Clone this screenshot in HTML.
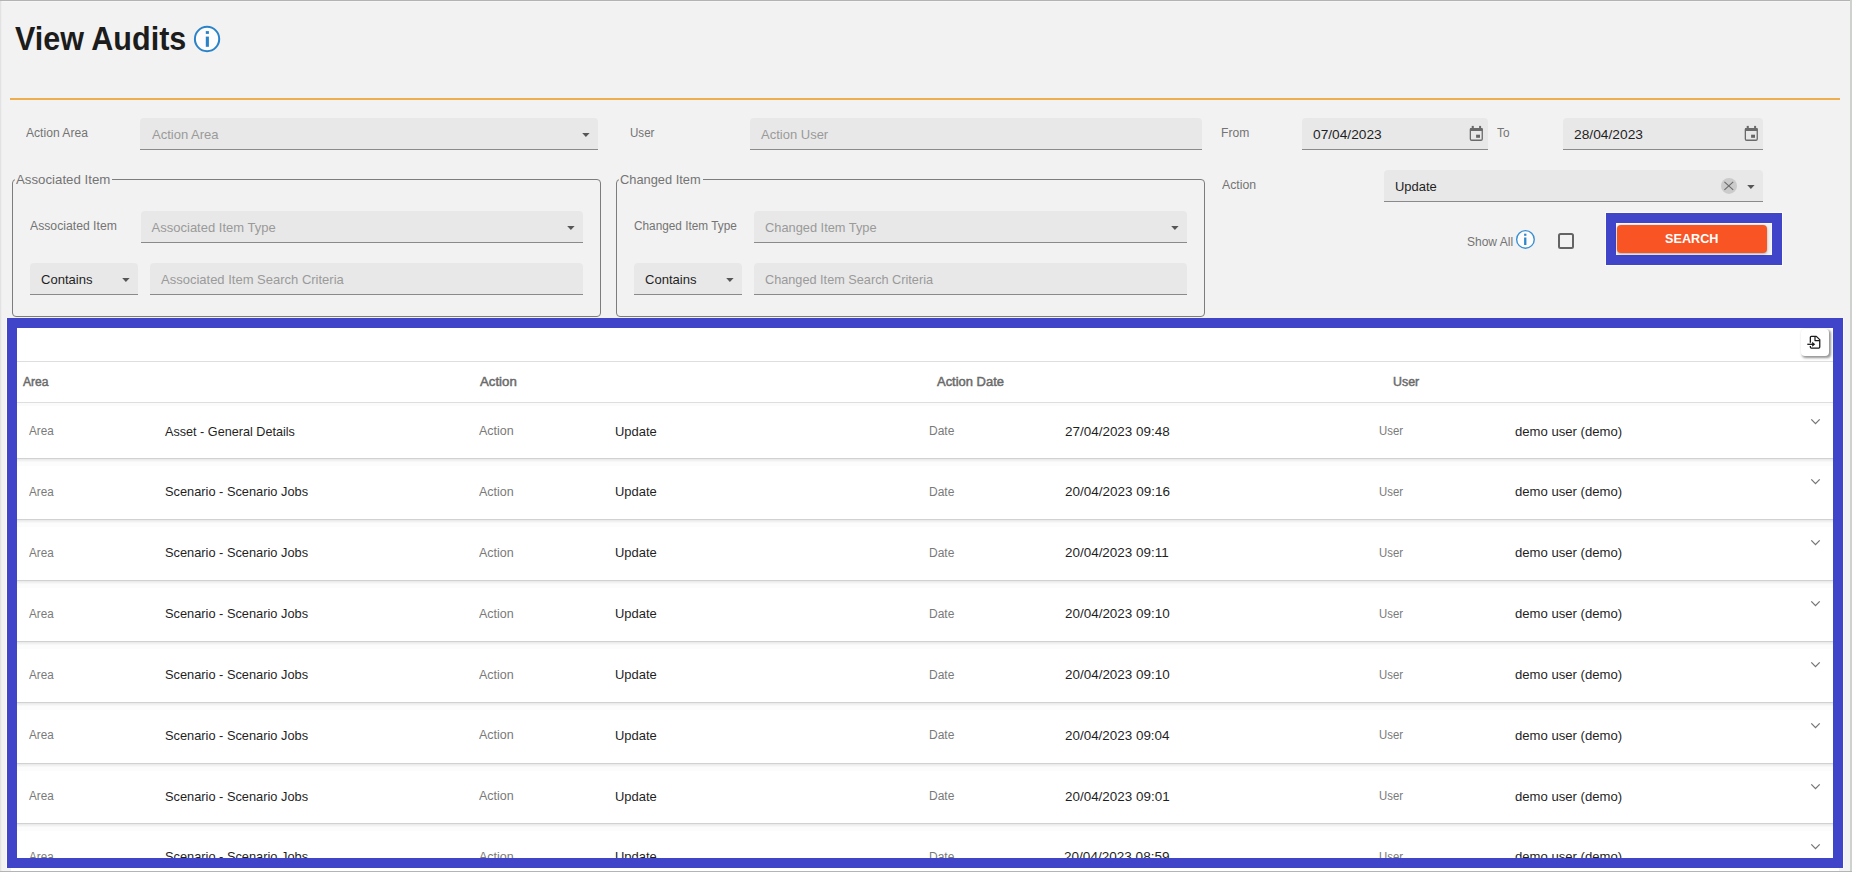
<!DOCTYPE html>
<html>
<head>
<meta charset="utf-8">
<title>View Audits</title>
<style>
*{box-sizing:border-box;margin:0;padding:0}
html,body{width:1852px;height:872px;overflow:hidden;background:#f2f2f2}
body{position:relative;font-family:"Liberation Sans",sans-serif;color:#212121;font-size:13px}
.abs{position:absolute}
.t{position:absolute;white-space:nowrap;line-height:1;transform-origin:0 50%}
.field{position:absolute;background:#e8e8e8;border-bottom:1px solid #8a8a8a;border-radius:4px 4px 0 0;height:32px}
.arrow{position:absolute;width:0;height:0;border-left:4px solid transparent;border-right:4px solid transparent;border-top:4px solid #555}
.fs{position:absolute;border:1px solid #7d7d7d;border-radius:4px}
.legbg{position:absolute;background:#f2f2f2;height:3px}
.hl{position:absolute;left:17px;width:1816px;height:1px}
</style>
</head>
<body>
<!-- window edges -->
<div class="abs" style="left:0;top:0;width:1852px;height:1px;background:#b2b4b2"></div>
<div class="abs" style="left:0;top:1px;width:1852px;height:1px;background:#f6f6f6"></div>
<div class="abs" style="left:0;top:1px;width:1px;height:871px;background:#e2e2e2"></div>
<div class="abs" style="left:1px;top:1px;width:1px;height:871px;background:#eeeeee"></div>
<div class="abs" style="left:1850px;top:0;width:2px;height:872px;background:#cfd1cf"></div>
<div class="abs" style="left:0;top:871px;width:1852px;height:1px;background:#b2b4b6"></div>

<!-- title icon + rule -->
<svg class="abs" style="left:192px;top:24px" width="30" height="30" viewBox="0 0 30 30"><circle cx="15.05" cy="15" r="12.15" fill="#fdfdfd" stroke="#2a82c9" stroke-width="2"/><rect x="13.8" y="12.6" width="3.1" height="10.2" fill="#2a82c9"/><rect x="13.8" y="7.1" width="3.1" height="2.8" fill="#2a82c9"/></svg>
<div class="abs" style="left:10px;top:98px;width:1830px;height:2px;background:#f0ad4e"></div>

<!-- row 1 fields -->
<div class="field" style="left:140px;top:118px;width:458px"></div>
<svg class="abs" style="left:582px;top:132.7px" width="8" height="5" viewBox="0 0 8 5"><path d="M0.2 0h7.4L3.9 3.9z" fill="#565656"/></svg>
<div class="field" style="left:750px;top:118px;width:452px"></div>
<div class="field" style="left:1302px;top:118px;width:186px"></div>
<div class="field" style="left:1563px;top:118px;width:200px"></div>

<!-- fieldset 1 -->
<div class="fs" style="left:12px;top:179px;width:589px;height:138px"></div>
<div class="legbg" style="left:15px;top:178px;width:97px"></div>
<div class="field" style="left:141px;top:211px;width:442px"></div>
<svg class="abs" style="left:567px;top:225.7px" width="8" height="5" viewBox="0 0 8 5"><path d="M0.2 0h7.4L3.9 3.9z" fill="#565656"/></svg>
<div class="field" style="left:30px;top:263px;width:108px"></div>
<svg class="abs" style="left:122px;top:277.7px" width="8" height="5" viewBox="0 0 8 5"><path d="M0.2 0h7.4L3.9 3.9z" fill="#565656"/></svg>
<div class="field" style="left:150px;top:263px;width:433px"></div>

<!-- fieldset 2 -->
<div class="fs" style="left:616px;top:179px;width:589px;height:138px"></div>
<div class="legbg" style="left:619px;top:178px;width:84px"></div>
<div class="field" style="left:754px;top:211px;width:433px"></div>
<svg class="abs" style="left:1171px;top:225.7px" width="8" height="5" viewBox="0 0 8 5"><path d="M0.2 0h7.4L3.9 3.9z" fill="#565656"/></svg>
<div class="field" style="left:634px;top:263px;width:108px"></div>
<svg class="abs" style="left:726px;top:277.7px" width="8" height="5" viewBox="0 0 8 5"><path d="M0.2 0h7.4L3.9 3.9z" fill="#565656"/></svg>
<div class="field" style="left:754px;top:263px;width:433px"></div>

<!-- action -->
<div class="field" style="left:1384px;top:170px;width:379px"></div>
<svg class="abs" style="left:1747px;top:184.8px" width="8" height="5" viewBox="0 0 8 5"><path d="M0.2 0h7.4L3.9 3.9z" fill="#565656"/></svg>


<!-- calendar icons -->
<svg class="abs" style="left:1460.0px;top:118px" width="30" height="30" viewBox="0 0 30 30"><rect x="10.35" y="10.55" width="11.9" height="11.7" rx="1.3" fill="none" stroke="#6a6a6a" stroke-width="1.3"/><rect x="9.9" y="9.9" width="12.8" height="3" rx="0.8" fill="#6a6a6a"/><rect x="11.7" y="7.9" width="2.1" height="2.6" fill="#6a6a6a"/><rect x="19.1" y="7.9" width="2" height="2.6" fill="#6a6a6a"/><rect x="16.1" y="16.7" width="3.9" height="3.1" fill="#666"/></svg>
<svg class="abs" style="left:1735.0px;top:118px" width="30" height="30" viewBox="0 0 30 30"><rect x="10.35" y="10.55" width="11.9" height="11.7" rx="1.3" fill="none" stroke="#6a6a6a" stroke-width="1.3"/><rect x="9.9" y="9.9" width="12.8" height="3" rx="0.8" fill="#6a6a6a"/><rect x="11.7" y="7.9" width="2.1" height="2.6" fill="#6a6a6a"/><rect x="19.1" y="7.9" width="2" height="2.6" fill="#6a6a6a"/><rect x="16.1" y="16.7" width="3.9" height="3.1" fill="#666"/></svg>
<!-- clear btn -->
<svg class="abs" style="left:1720px;top:177px" width="18" height="18" viewBox="0 0 18 18"><circle cx="9" cy="8.9" r="8" fill="#cbcbcb"/><path d="M4.4 4.9l8.8 8M13.2 4.9l-8.8 8" stroke="#6a6a6a" stroke-width="1.1" fill="none"/></svg>
<!-- small info -->
<svg class="abs" style="left:1514px;top:228px" width="24" height="24" viewBox="0 0 24 24"><circle cx="11.45" cy="11.4" r="8.8" fill="#fdfdfd" stroke="#3a8fd0" stroke-width="1.4"/><rect x="10.1" y="9.5" width="2.3" height="7.5" fill="#2e86cb"/><rect x="10.1" y="5.7" width="2.3" height="2.1" fill="#2e86cb"/></svg>
<!-- show all checkbox -->
<div class="abs" style="left:1558px;top:233px;width:16px;height:16px;border:2px solid #646464;border-radius:2.5px"></div>

<!-- search -->
<div class="abs" style="left:1605px;top:212px;width:178px;height:54px;background:#fbfbf6"></div>
<div class="abs" style="left:1606px;top:213px;width:176px;height:52px;background:#3f44c9"></div>
<div class="abs" style="left:1616px;top:223px;width:156px;height:32px;background:#f2f2f2;border:1px solid #f8f9f7"></div>
<div class="abs" style="left:1617px;top:225px;width:150px;height:28px;background:#f95423;border-radius:4px;box-shadow:0 1px 3px rgba(0,0,0,.3)"></div>

<!-- blue frame + table bg -->
<div class="abs" style="left:11px;top:868px;width:1828px;height:3px;background:#fff"></div><div class="abs" style="left:6px;top:318px;width:1838px;height:550px;background:#fbfbf7"></div>
<div class="abs" style="left:7px;top:318px;width:1836px;height:550px;background:#3f44c9"></div>
<div class="abs" id="tbl" style="left:17px;top:328px;width:1816px;height:530px;background:#fff;overflow:hidden"></div>
<div class="hl" style="top:361px;background:#dedede"></div>
<div class="hl" style="top:402px;background:#dedede"></div>
<div class="hl" style="top:403px;height:3px;background:#fbfbfb"></div>
<div class="hl" style="top:458px;background:#d1d1d1"></div>
<div class="hl" style="top:459px;height:3px;background:linear-gradient(#e8e8e8,#fafafa)"></div>
<div class="hl" style="top:462px;height:4px;background:#fcfcfc"></div>
<div class="hl" style="top:519px;background:#d1d1d1"></div>
<div class="hl" style="top:520px;height:3px;background:linear-gradient(#e8e8e8,#fafafa)"></div>
<div class="hl" style="top:523px;height:4px;background:#fcfcfc"></div>
<div class="hl" style="top:580px;background:#d1d1d1"></div>
<div class="hl" style="top:581px;height:3px;background:linear-gradient(#e8e8e8,#fafafa)"></div>
<div class="hl" style="top:584px;height:4px;background:#fcfcfc"></div>
<div class="hl" style="top:641px;background:#d1d1d1"></div>
<div class="hl" style="top:642px;height:3px;background:linear-gradient(#e8e8e8,#fafafa)"></div>
<div class="hl" style="top:645px;height:4px;background:#fcfcfc"></div>
<div class="hl" style="top:702px;background:#d1d1d1"></div>
<div class="hl" style="top:703px;height:3px;background:linear-gradient(#e8e8e8,#fafafa)"></div>
<div class="hl" style="top:706px;height:4px;background:#fcfcfc"></div>
<div class="hl" style="top:763px;background:#d1d1d1"></div>
<div class="hl" style="top:764px;height:3px;background:linear-gradient(#e8e8e8,#fafafa)"></div>
<div class="hl" style="top:767px;height:4px;background:#fcfcfc"></div>
<div class="hl" style="top:823px;background:#d1d1d1"></div>
<div class="hl" style="top:824px;height:3px;background:linear-gradient(#e8e8e8,#fafafa)"></div>
<div class="hl" style="top:827px;height:4px;background:#fcfcfc"></div>
<svg class="abs" style="left:1810px;top:417.8px" width="11" height="8" viewBox="0 0 11 8"><path d="M1.3 1.4l4.2 4.2 4.2-4.2" fill="none" stroke="#757575" stroke-width="1.3"/></svg>
<svg class="abs" style="left:1810px;top:478.1px" width="11" height="8" viewBox="0 0 11 8"><path d="M1.3 1.4l4.2 4.2 4.2-4.2" fill="none" stroke="#757575" stroke-width="1.3"/></svg>
<svg class="abs" style="left:1810px;top:539.0px" width="11" height="8" viewBox="0 0 11 8"><path d="M1.3 1.4l4.2 4.2 4.2-4.2" fill="none" stroke="#757575" stroke-width="1.3"/></svg>
<svg class="abs" style="left:1810px;top:600.0px" width="11" height="8" viewBox="0 0 11 8"><path d="M1.3 1.4l4.2 4.2 4.2-4.2" fill="none" stroke="#757575" stroke-width="1.3"/></svg>
<svg class="abs" style="left:1810px;top:661.0px" width="11" height="8" viewBox="0 0 11 8"><path d="M1.3 1.4l4.2 4.2 4.2-4.2" fill="none" stroke="#757575" stroke-width="1.3"/></svg>
<svg class="abs" style="left:1810px;top:722.0px" width="11" height="8" viewBox="0 0 11 8"><path d="M1.3 1.4l4.2 4.2 4.2-4.2" fill="none" stroke="#757575" stroke-width="1.3"/></svg>
<svg class="abs" style="left:1810px;top:783.0px" width="11" height="8" viewBox="0 0 11 8"><path d="M1.3 1.4l4.2 4.2 4.2-4.2" fill="none" stroke="#757575" stroke-width="1.3"/></svg>
<svg class="abs" style="left:1810px;top:843.2px" width="11" height="8" viewBox="0 0 11 8"><path d="M1.3 1.4l4.2 4.2 4.2-4.2" fill="none" stroke="#757575" stroke-width="1.3"/></svg>
<div class="abs" style="left:1801px;top:328.5px;width:28px;height:27.5px;background:#fff;border-radius:4px;box-shadow:1.5px 1.5px 2.5px rgba(0,0,0,.42)"></div>
<svg class="abs" style="left:1803px;top:331px" width="24" height="22" viewBox="0 0 24 22"><g fill="none" stroke="#1c1c1c" stroke-width="1.3" stroke-linejoin="round"><path d="M7.35 11.7V6.35a1 1 0 0 1 1-1H13.3L16.75 8.6V16.05a1 1 0 0 1-1 1H8.35a1 1 0 0 1-1-1V15.1"/><path d="M12 5.4V9.6H16.7" stroke-width="1.2"/><path d="M4.3 13.3H10"/></g><path d="M9.2 10.8L12.2 13.3L9.2 15.8z" fill="#1c1c1c"/></svg>
<div class="t" style="left:15.21px;top:22.0px;font-size:33px;color:#1c1c1c;font-weight:bold;transform:scaleX(0.9247);">View Audits</div>
<div class="t" style="left:26.20px;top:127.1px;font-size:12px;color:#747474;transform:scaleX(1.0081);">Action Area</div>
<div class="t" style="left:151.60px;top:128.1px;font-size:13px;color:#9a9a9a;transform:scaleX(1.0015);">Action Area</div>
<div class="t" style="left:629.66px;top:127.1px;font-size:12px;color:#747474;transform:scaleX(0.9648);">User</div>
<div class="t" style="left:761.00px;top:128.1px;font-size:13px;color:#9a9a9a;">Action User</div>
<div class="t" style="left:1221.38px;top:126.8px;font-size:12px;color:#747474;transform:scaleX(1.0089);">From</div>
<div class="t" style="left:1312.82px;top:128.1px;font-size:13px;color:#1f1f1f;transform:scaleX(1.0563);">07/04/2023</div>
<div class="t" style="left:1496.79px;top:126.8px;font-size:12px;color:#747474;transform:scaleX(0.9851);">To</div>
<div class="t" style="left:1573.64px;top:128.1px;font-size:13px;color:#1f1f1f;transform:scaleX(1.0598);">28/04/2023</div>
<div class="t" style="left:16.45px;top:173.0px;font-size:13px;color:#747474;transform:scaleX(1.0197);">Associated Item</div>
<div class="t" style="left:620.30px;top:173.0px;font-size:13px;color:#747474;transform:scaleX(0.9874);">Changed Item</div>
<div class="t" style="left:30.43px;top:220.1px;font-size:12px;color:#747474;transform:scaleX(1.0174);">Associated Item</div>
<div class="t" style="left:151.60px;top:221.1px;font-size:13px;color:#9a9a9a;">Associated Item Type</div>
<div class="t" style="left:40.94px;top:273.4px;font-size:13px;color:#1f1f1f;transform:scaleX(1.0040);">Contains</div>
<div class="t" style="left:161.00px;top:273.4px;font-size:13px;color:#9a9a9a;">Associated Item Search Criteria</div>
<div class="t" style="left:633.67px;top:220.1px;font-size:12px;color:#747474;transform:scaleX(0.9841);">Changed Item Type</div>
<div class="t" style="left:764.58px;top:221.1px;font-size:13px;color:#9a9a9a;transform:scaleX(0.9859);">Changed Item Type</div>
<div class="t" style="left:644.94px;top:273.4px;font-size:13px;color:#1f1f1f;transform:scaleX(1.0040);">Contains</div>
<div class="t" style="left:764.78px;top:273.4px;font-size:13px;color:#9a9a9a;transform:scaleX(0.9770);">Changed Item Search Criteria</div>
<div class="t" style="left:1222.09px;top:178.7px;font-size:12px;color:#747474;transform:scaleX(1.0237);">Action</div>
<div class="t" style="left:1394.74px;top:180.4px;font-size:13px;color:#1f1f1f;transform:scaleX(0.9976);">Update</div>
<div class="t" style="left:1466.87px;top:235.6px;font-size:12px;color:#747474;transform:scaleX(1.0009);">Show All</div>
<div class="t" style="left:1665.01px;top:232.1px;font-size:13px;color:#ffffff;font-weight:bold;transform:scaleX(0.9738);">SEARCH</div>
<div class="t" style="left:22.68px;top:375.8px;font-size:12px;color:#6a6a6a;transform:scaleX(1.0060);-webkit-text-stroke:0.45px #6a6a6a;">Area</div>
<div class="t" style="left:479.52px;top:375.8px;font-size:12px;color:#6a6a6a;transform:scaleX(1.1025);-webkit-text-stroke:0.45px #6a6a6a;">Action</div>
<div class="t" style="left:936.84px;top:375.8px;font-size:12px;color:#6a6a6a;transform:scaleX(1.0796);-webkit-text-stroke:0.45px #6a6a6a;">Action Date</div>
<div class="t" style="left:1393.40px;top:375.8px;font-size:12px;color:#6a6a6a;transform:scaleX(1.0334);-webkit-text-stroke:0.45px #6a6a6a;">User</div>
<div class="t" style="left:28.79px;top:424.8px;font-size:12px;color:#7a7a7a;transform:scaleX(0.9729);">Area</div>
<div class="t" style="left:165.30px;top:424.7px;font-size:13px;color:#1f1f1f;transform:scaleX(0.9719);">Asset - General Details</div>
<div class="t" style="left:479.15px;top:424.8px;font-size:12px;color:#7a7a7a;transform:scaleX(1.0424);">Action</div>
<div class="t" style="left:614.56px;top:424.7px;font-size:13px;color:#1f1f1f;transform:scaleX(0.9977);">Update</div>
<div class="t" style="left:928.89px;top:424.8px;font-size:12px;color:#7a7a7a;transform:scaleX(1.0019);">Date</div>
<div class="t" style="left:1065.02px;top:424.7px;font-size:13px;color:#1f1f1f;transform:scaleX(1.0350);">27/04/2023 09:48</div>
<div class="t" style="left:1379.04px;top:424.8px;font-size:12px;color:#7a7a7a;transform:scaleX(0.9469);">User</div>
<div class="t" style="left:1514.62px;top:424.7px;font-size:13px;color:#1f1f1f;transform:scaleX(1.0086);">demo user (demo)</div>
<div class="t" style="left:28.79px;top:485.8px;font-size:12px;color:#7a7a7a;transform:scaleX(0.9729);">Area</div>
<div class="t" style="left:164.64px;top:485.0px;font-size:13px;color:#1f1f1f;transform:scaleX(0.9849);">Scenario - Scenario Jobs</div>
<div class="t" style="left:479.15px;top:485.8px;font-size:12px;color:#7a7a7a;transform:scaleX(1.0424);">Action</div>
<div class="t" style="left:614.56px;top:485.0px;font-size:13px;color:#1f1f1f;transform:scaleX(0.9977);">Update</div>
<div class="t" style="left:928.89px;top:485.8px;font-size:12px;color:#7a7a7a;transform:scaleX(1.0019);">Date</div>
<div class="t" style="left:1064.92px;top:485.0px;font-size:13px;color:#1f1f1f;transform:scaleX(1.0367);">20/04/2023 09:16</div>
<div class="t" style="left:1379.04px;top:485.8px;font-size:12px;color:#7a7a7a;transform:scaleX(0.9469);">User</div>
<div class="t" style="left:1514.62px;top:485.0px;font-size:13px;color:#1f1f1f;transform:scaleX(1.0086);">demo user (demo)</div>
<div class="t" style="left:28.79px;top:546.8px;font-size:12px;color:#7a7a7a;transform:scaleX(0.9729);">Area</div>
<div class="t" style="left:164.64px;top:546.0px;font-size:13px;color:#1f1f1f;transform:scaleX(0.9849);">Scenario - Scenario Jobs</div>
<div class="t" style="left:479.15px;top:546.8px;font-size:12px;color:#7a7a7a;transform:scaleX(1.0424);">Action</div>
<div class="t" style="left:614.56px;top:546.0px;font-size:13px;color:#1f1f1f;transform:scaleX(0.9977);">Update</div>
<div class="t" style="left:928.89px;top:546.8px;font-size:12px;color:#7a7a7a;transform:scaleX(1.0019);">Date</div>
<div class="t" style="left:1065.02px;top:546.0px;font-size:13px;color:#1f1f1f;transform:scaleX(1.0339);">20/04/2023 09:11</div>
<div class="t" style="left:1379.04px;top:546.8px;font-size:12px;color:#7a7a7a;transform:scaleX(0.9469);">User</div>
<div class="t" style="left:1514.62px;top:546.0px;font-size:13px;color:#1f1f1f;transform:scaleX(1.0086);">demo user (demo)</div>
<div class="t" style="left:28.79px;top:607.8px;font-size:12px;color:#7a7a7a;transform:scaleX(0.9729);">Area</div>
<div class="t" style="left:164.64px;top:607.0px;font-size:13px;color:#1f1f1f;transform:scaleX(0.9849);">Scenario - Scenario Jobs</div>
<div class="t" style="left:479.15px;top:607.8px;font-size:12px;color:#7a7a7a;transform:scaleX(1.0424);">Action</div>
<div class="t" style="left:614.56px;top:607.0px;font-size:13px;color:#1f1f1f;transform:scaleX(0.9977);">Update</div>
<div class="t" style="left:928.89px;top:607.8px;font-size:12px;color:#7a7a7a;transform:scaleX(1.0019);">Date</div>
<div class="t" style="left:1065.02px;top:607.0px;font-size:13px;color:#1f1f1f;transform:scaleX(1.0344);">20/04/2023 09:10</div>
<div class="t" style="left:1379.04px;top:607.8px;font-size:12px;color:#7a7a7a;transform:scaleX(0.9469);">User</div>
<div class="t" style="left:1514.62px;top:607.0px;font-size:13px;color:#1f1f1f;transform:scaleX(1.0086);">demo user (demo)</div>
<div class="t" style="left:28.79px;top:668.8px;font-size:12px;color:#7a7a7a;transform:scaleX(0.9729);">Area</div>
<div class="t" style="left:164.64px;top:668.0px;font-size:13px;color:#1f1f1f;transform:scaleX(0.9849);">Scenario - Scenario Jobs</div>
<div class="t" style="left:479.15px;top:668.8px;font-size:12px;color:#7a7a7a;transform:scaleX(1.0424);">Action</div>
<div class="t" style="left:614.56px;top:668.0px;font-size:13px;color:#1f1f1f;transform:scaleX(0.9977);">Update</div>
<div class="t" style="left:928.89px;top:668.8px;font-size:12px;color:#7a7a7a;transform:scaleX(1.0019);">Date</div>
<div class="t" style="left:1065.02px;top:668.0px;font-size:13px;color:#1f1f1f;transform:scaleX(1.0344);">20/04/2023 09:10</div>
<div class="t" style="left:1379.04px;top:668.8px;font-size:12px;color:#7a7a7a;transform:scaleX(0.9469);">User</div>
<div class="t" style="left:1514.62px;top:668.0px;font-size:13px;color:#1f1f1f;transform:scaleX(1.0086);">demo user (demo)</div>
<div class="t" style="left:28.79px;top:728.8px;font-size:12px;color:#7a7a7a;transform:scaleX(0.9729);">Area</div>
<div class="t" style="left:164.64px;top:729.0px;font-size:13px;color:#1f1f1f;transform:scaleX(0.9849);">Scenario - Scenario Jobs</div>
<div class="t" style="left:479.15px;top:728.8px;font-size:12px;color:#7a7a7a;transform:scaleX(1.0424);">Action</div>
<div class="t" style="left:614.56px;top:729.0px;font-size:13px;color:#1f1f1f;transform:scaleX(0.9977);">Update</div>
<div class="t" style="left:928.89px;top:728.8px;font-size:12px;color:#7a7a7a;transform:scaleX(1.0019);">Date</div>
<div class="t" style="left:1065.02px;top:729.0px;font-size:13px;color:#1f1f1f;transform:scaleX(1.0328);">20/04/2023 09:04</div>
<div class="t" style="left:1379.04px;top:728.8px;font-size:12px;color:#7a7a7a;transform:scaleX(0.9469);">User</div>
<div class="t" style="left:1514.62px;top:729.0px;font-size:13px;color:#1f1f1f;transform:scaleX(1.0086);">demo user (demo)</div>
<div class="t" style="left:28.79px;top:789.8px;font-size:12px;color:#7a7a7a;transform:scaleX(0.9729);">Area</div>
<div class="t" style="left:164.64px;top:790.0px;font-size:13px;color:#1f1f1f;transform:scaleX(0.9849);">Scenario - Scenario Jobs</div>
<div class="t" style="left:479.15px;top:789.8px;font-size:12px;color:#7a7a7a;transform:scaleX(1.0424);">Action</div>
<div class="t" style="left:614.56px;top:790.0px;font-size:13px;color:#1f1f1f;transform:scaleX(0.9977);">Update</div>
<div class="t" style="left:928.89px;top:789.8px;font-size:12px;color:#7a7a7a;transform:scaleX(1.0019);">Date</div>
<div class="t" style="left:1065.02px;top:790.0px;font-size:13px;color:#1f1f1f;transform:scaleX(1.0336);">20/04/2023 09:01</div>
<div class="t" style="left:1379.04px;top:789.8px;font-size:12px;color:#7a7a7a;transform:scaleX(0.9469);">User</div>
<div class="t" style="left:1514.62px;top:790.0px;font-size:13px;color:#1f1f1f;transform:scaleX(1.0086);">demo user (demo)</div>
<div class="t" style="left:28.79px;top:850.8px;font-size:12px;color:#7a7a7a;transform:scaleX(0.9729);">Area</div>
<div class="t" style="left:164.64px;top:850.2px;font-size:13px;color:#1f1f1f;transform:scaleX(0.9849);">Scenario - Scenario Jobs</div>
<div class="t" style="left:479.15px;top:850.8px;font-size:12px;color:#7a7a7a;transform:scaleX(1.0424);">Action</div>
<div class="t" style="left:614.56px;top:850.2px;font-size:13px;color:#1f1f1f;transform:scaleX(0.9977);">Update</div>
<div class="t" style="left:928.89px;top:850.8px;font-size:12px;color:#7a7a7a;transform:scaleX(1.0019);">Date</div>
<div class="t" style="left:1064.42px;top:850.2px;font-size:13px;color:#1f1f1f;transform:scaleX(1.0426);">20/04/2023 08:59</div>
<div class="t" style="left:1379.04px;top:850.8px;font-size:12px;color:#7a7a7a;transform:scaleX(0.9469);">User</div>
<div class="t" style="left:1514.62px;top:850.2px;font-size:13px;color:#1f1f1f;transform:scaleX(1.0086);">demo user (demo)</div>
<div class="abs" style="left:7px;top:858px;width:1836px;height:10px;background:#3f44c9"></div>
</body>
</html>
